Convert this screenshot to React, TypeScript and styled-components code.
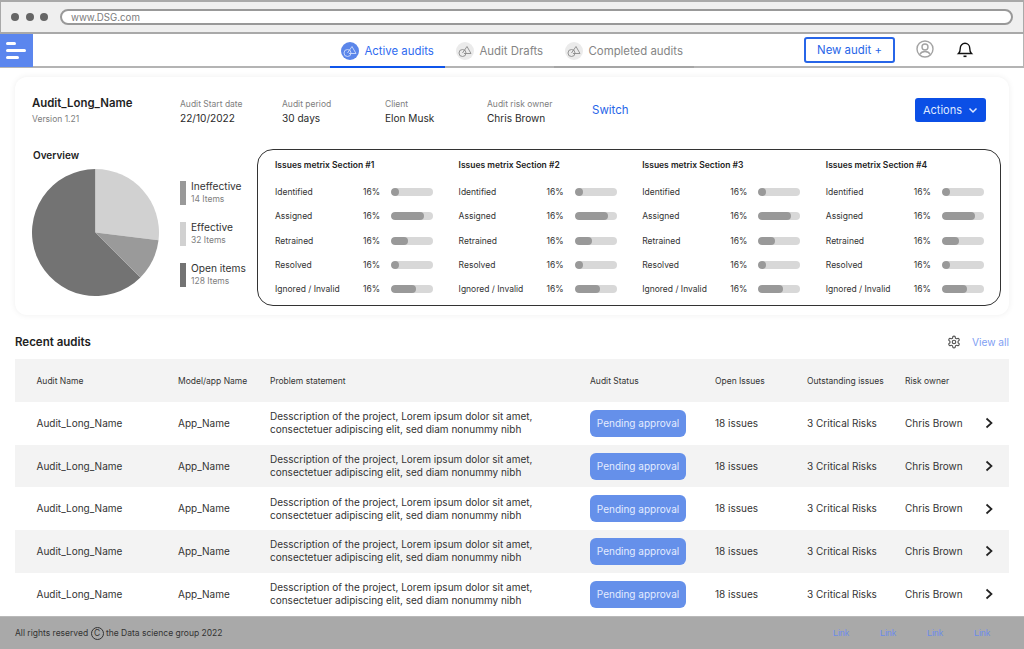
import React from "react";
import styled, { createGlobalStyle } from "styled-components";

const Global = createGlobalStyle`
  html, body { margin: 0; padding: 0; background: #fff; }
  body { font-family: Inter, "Liberation Sans", sans-serif; color: #2b2b2b; }
  * { box-sizing: border-box; }
`;
const Page = styled.div`
  width: 1024px; height: 649px; overflow: hidden; display: flex; flex-direction: column; background: #fff;
`;
const BrowserBar = styled.div`
  height: 34px; flex: none; background: #efefef; border: 2px solid #a9a9a9;
  border-right-width: 1px; border-left-width: 1px;
  display: flex; align-items: center; padding: 0 10px;
`;
const Dots = styled.div`display: flex; gap: 6.5px; margin-right: 12px;`;
const Dot = styled.span`width: 8px; height: 8px; border-radius: 50%; background: #666;`;
const Address = styled.div`
  flex: 1; height: 16px; border: 2px solid #999; border-radius: 8px; background: #fff;
  font-size: 9.7px; color: #7b7b7b; display: flex; align-items: center; padding-left: 9px;
`;
const Nav = styled.nav`
  height: 34px; flex: none; display: flex; align-items: stretch; border-bottom: 2px solid #b4b4b4; border-right: 1px solid #b4b4b4;
`;
const Burger = styled.div`
  width: 33px; margin-bottom: -1px; background: #5b86ee; display: flex; flex-direction: column; justify-content: center; gap: 4px; padding-left: 6px;
`;
const BurgerLine = styled.span<{ $w: number }>`
  display: block; width: ${p => p.$w}px; height: 3px; border-radius: 2px; background: #fff;
`;
const Tabs = styled.div`display: flex; margin-left: 297px;`;
const Tab = styled.div<{ $active?: boolean; $w: number; $line?: boolean }>`
  width: ${p => p.$w}px; display: flex; align-items: center; gap: 6px; padding: 1px 0 0 10.5px; margin-bottom: -2px;
  font-size: 11.4px; color: ${p => (p.$active ? "#2f6bf0" : "#858585")};
  border-bottom: 2px solid ${p => (p.$active ? "#0f55ea" : p.$line ? "#a5a5a5" : "transparent")};
`;
const TabIcon = styled.span<{ $active?: boolean }>`
  width: 18px; height: 18px; border-radius: 50%; flex: none; display: flex; align-items: center; justify-content: center;
  background: ${p => (p.$active ? "#5b86ea" : "#ebebeb")}; color: ${p => (p.$active ? "#cfdcfb" : "#8a8a8a")};
`;
const NewAudit = styled.button`
  margin: 3px 0 3px 110px; width: 91px; height: 26px; border: 2px solid #2765e8; border-radius: 3px; background: #fff;
  color: #2765e8; font: 11.4px Inter, sans-serif; padding: 0;
`;
const IconSlot = styled.span<{ $ml: number; $c: string }>`
  margin-left: ${p => p.$ml}px; display: flex; align-items: center; color: ${p => p.$c}; margin-top: -3px;
`;
const Card = styled.section`
  height: 238px; flex: none; margin: 9px 15px 0; padding: 0 8px 0 17px; border-radius: 12px; background: #fff;
  box-shadow: 0 0 6px rgba(0,0,0,.07); display: flex; flex-direction: column;
`;
const CardTop = styled.div`height: 72px; flex: none; display: flex; align-items: flex-start; padding-top: 19px;`;
const TitleBlock = styled.div`width: 148px; flex: none;`;
const CardTitle = styled.div`font-size: 11.4px; font-weight: 600; color: #1f1f1f; line-height: 14px;`;
const Version = styled.div`font-size: 8.5px; color: #7d7d7d; line-height: 10px; margin-top: 4px;`;
const Meta = styled.div<{ $w: number }>`width: ${p => p.$w}px; flex: none; padding-top: 3px;`;
const MetaLabel = styled.div`font-size: 8.5px; color: #808080; line-height: 10px;`;
const MetaValue = styled.div`font-size: 10.1px; color: #2b2b2b; line-height: 13px; margin-top: 3px;`;
const SwitchLink = styled.div`width: 323px; flex: none; font-size: 11.5px; color: #2765e8; padding-top: 7px;`;
const Actions = styled.button`
  width: 71px; height: 24px; margin-top: 2px; background: #0b4fe6; color: #dfe8ff; border: 0; border-radius: 3px;
  font: 11px Inter, sans-serif; display: flex; align-items: center; justify-content: center; gap: 6px; padding: 0;
`;
const CardBody = styled.div`display: flex; flex: 1;`;
const Overview = styled.div`width: 148px; flex: none;`;
const OverviewTitle = styled.div`font-size: 10px; font-weight: 600; line-height: 12px; color: #222; margin-bottom: 8px; padding-left: 1px;`;
const Pie = styled.svg`display: block;`;
const Legend = styled.div`width: 77px; flex: none; display: flex; flex-direction: column; gap: 17px; padding-top: 32px;`;
const LegendItem = styled.div`display: flex; gap: 5px; height: 24px;`;
const Swatch = styled.span<{ $c: string }>`width: 6px; height: 24px; background: ${p => p.$c};`;
const LegendText = styled.div`margin-top: -1px;`;
const LegendLabel = styled.div`font-size: 10.2px; line-height: 12px; color: #333;`;
const LegendSub = styled.div`font-size: 8.5px; line-height: 11px; color: #808080; margin-top: 2px;`;
const MetricBox = styled.div`
  width: 744px; height: 157px; border: 1px solid #333; border-radius: 16px; padding: 0 0 0 17px;
  display: grid; grid-template-columns: repeat(4, 183.6px);
`;
const Section = styled.div`padding-top: 8.5px;`;
const SectionTitle = styled.div`font-size: 8.5px; font-weight: 600; color: #222; line-height: 12px; margin-bottom: 9.5px;`;
const MetricRow = styled.div`
  height: 24.3px; display: grid; grid-template-columns: 88px 28px 42px; align-items: center; font-size: 8.5px; color: #333;
`;
const Track = styled.div`height: 8px; border-radius: 4px; background: #d8d8d8; overflow: hidden;`;
const Fill = styled.div`height: 8px; border-radius: 4px; background: #999;`;
const RecentHead = styled.div`
  height: 44.4px; flex: none; margin: 0 15px; display: flex; align-items: center; padding-top: 9px;
`;
const RecentTitle = styled.h2`margin: 0; font-size: 11.5px; font-weight: 600; color: #222; flex: 1;`;
const ViewAll = styled.span`font-size: 10.2px; color: #7fa0f3; margin-left: 11px;`;
const Gear = styled.span`display: flex; color: #555;`;
const Table = styled.div`margin: 0 15px; flex: 1; display: flex; flex-direction: column;`;
const Grid = styled.div<{ $shade?: boolean; $h: number }>`
  height: ${p => p.$h}px; flex: none; display: grid; padding-left: 21.5px; align-items: center;
  grid-template-columns: 141.5px 92px 320px 125px 92px 98px 77px 16px;
  background: ${p => (p.$shade ? "#f3f3f3" : "#fff")};
`;
const HeadCell = styled.div`font-size: 8.5px; color: #333;`;
const Cell = styled.div`font-size: 10px; color: #333; line-height: 13px;`;
const Pending = styled.span`
  width: 96px; height: 27px; border-radius: 6px; background: #6590ea; color: #e4ecff; font-size: 10px;
  display: flex; align-items: center; justify-content: center;
`;
const Chevron = styled.span`display: flex; color: #222;`;
const Footer = styled.footer`
  height: 33px; flex: none; background: #a9a9a9; border-top: 1px solid #b9b9b9; display: flex; align-items: center;
  padding: 0 0 0 15px; font-size: 8.5px; color: #333; white-space: pre;
`;
const Copy = styled.span`
  width: 13px; height: 13px; border: 1px solid #333; border-radius: 50%; display: inline-flex; align-items: center; justify-content: center; font-size: 8.5px;
`;
const FooterLinks = styled.div`margin-left: auto; margin-right: 34px; display: flex; gap: 31px;`;
const FooterLink = styled.span`font-family: "Liberation Sans", sans-serif; font-size: 8.8px; width: 16px; color: #6b8bea;`;

const Glyph = () => (
  <svg width="14" height="14" viewBox="0 0 14 14" fill="none" stroke="currentColor" strokeWidth="0.9">
    <circle cx="4.5" cy="9" r="3.5" />
    <path d="M4.5 9 9 2.500 13 9.500H6" />
  </svg>
);
const TabItem = ({ label, w, active, line }: { label: string; w: number; active?: boolean; line?: boolean }) => (
  <Tab $w={w} $active={active} $line={line}>
    <TabIcon $active={active}><Glyph /></TabIcon>
    {label}
  </Tab>
);
const polar = (deg: number, r = 63.5) => {
  const a = ((deg - 90) * Math.PI) / 180;
  return `${63.5 + r * Math.cos(a)} ${63.5 + r * Math.sin(a)}`;
};
const slice = (from: number, to: number) =>
  `M63.5 63.5L${polar(from)}A63.5 63.5 0 ${to - from > 180 ? 1 : 0} 1 ${polar(to)}Z`;

const metricRows: [string, number][] = [
  ["Identified", 8], ["Assigned", 33], ["Retrained", 17], ["Resolved", 8], ["Ignored / Invalid", 25],
];
const rows = [0, 1, 2, 3, 4];

export default function App() {
  return (
    <Page>
      <Global />
      <BrowserBar>
        <Dots><Dot /><Dot /><Dot /></Dots>
        <Address>www.DSG.com</Address>
      </BrowserBar>
      <Nav>
        <Burger>
          <BurgerLine $w={10} /><BurgerLine $w={20} /><BurgerLine $w={13} />
        </Burger>
        <Tabs>
          <TabItem label="Active audits" w={115} active />
          <TabItem label="Audit Drafts" w={109} />
          <TabItem label="Completed audits" w={140} line />
        </Tabs>
        <NewAudit>New audit +</NewAudit>
        <IconSlot $ml={21} $c="#a3a3a3">
          <svg width="18" height="18" viewBox="0 0 18 18" fill="none" stroke="currentColor" strokeWidth="1.4">
            <circle cx="9" cy="9" r="8" />
            <circle cx="9" cy="7" r="3" />
            <path d="M3.800 14.500c1-2.200 3-3 5.200-3s4.200.8 5.200 3" />
          </svg>
        </IconSlot>
        <IconSlot $ml={22} $c="#111">
          <svg width="18" height="18" viewBox="0 0 18 18" fill="none" stroke="currentColor" strokeWidth="1.4">
            <path d="M2.500 13.500h13c-1.300-1.200-1.800-2.500-1.800-5.500a4.700 4.700 0 0 0-9.400 0c0 3-.5 4.300-1.800 5.500Z" />
            <path d="M7.500 16.300h3" strokeWidth="1.6" />
          </svg>
        </IconSlot>
      </Nav>
      <Card>
        <CardTop>
          <TitleBlock>
            <CardTitle>Audit_Long_Name</CardTitle>
            <Version>Version 1.21</Version>
          </TitleBlock>
          <Meta $w={102}><MetaLabel>Audit Start date</MetaLabel><MetaValue>22/10/2022</MetaValue></Meta>
          <Meta $w={103}><MetaLabel>Audit period</MetaLabel><MetaValue>30 days</MetaValue></Meta>
          <Meta $w={102}><MetaLabel>Client</MetaLabel><MetaValue>Elon Musk</MetaValue></Meta>
          <Meta $w={105}><MetaLabel>Audit risk owner</MetaLabel><MetaValue>Chris Brown</MetaValue></Meta>
          <SwitchLink>Switch</SwitchLink>
          <Actions>
            Actions
            <svg width="10" height="10" viewBox="0 0 10 10" fill="none" stroke="currentColor" strokeWidth="1.5"><path d="M1.500 3.500 5 7l3.500-3.500" /></svg>
          </Actions>
        </CardTop>
        <CardBody>
          <Overview>
            <OverviewTitle>Overview</OverviewTitle>
            <Pie width="127" height="127" viewBox="0 0 127 127">
              <path d={slice(135, 360)} fill="#737373" />
              <path d={slice(0, 97)} fill="#d1d1d1" />
              <path d={slice(97, 135)} fill="#9a9a9a" />
            </Pie>
          </Overview>
          <Legend>
            <LegendItem><Swatch $c="#999" /><LegendText><LegendLabel>Ineffective</LegendLabel><LegendSub>14 Items</LegendSub></LegendText></LegendItem>
            <LegendItem><Swatch $c="#d1d1d1" /><LegendText><LegendLabel>Effective</LegendLabel><LegendSub>32 Items</LegendSub></LegendText></LegendItem>
            <LegendItem><Swatch $c="#737373" /><LegendText><LegendLabel>Open items</LegendLabel><LegendSub>128 Items</LegendSub></LegendText></LegendItem>
          </Legend>
          <MetricBox>
            {[1, 2, 3, 4].map(n => (
              <Section key={n}>
                <SectionTitle>Issues metrix Section #{n}</SectionTitle>
                {metricRows.map(([label, w]) => (
                  <MetricRow key={label}>
                    <span>{label}</span>
                    <span>16%</span>
                    <Track><Fill style={{ width: w }} /></Track>
                  </MetricRow>
                ))}
              </Section>
            ))}
          </MetricBox>
        </CardBody>
      </Card>
      <RecentHead>
        <RecentTitle>Recent audits</RecentTitle>
        <Gear>
          <svg width="14" height="14" viewBox="0 0 24 24" fill="none" stroke="currentColor" strokeWidth="2" strokeLinecap="round" strokeLinejoin="round">
            <path d="M12.220 2h-.44a2 2 0 0 0-2 2v.18a2 2 0 0 1-1 1.730l-.43.25a2 2 0 0 1-2 0l-.15-.08a2 2 0 0 0-2.730.73l-.22.38a2 2 0 0 0 .73 2.730l.15.1a2 2 0 0 1 1 1.720v.51a2 2 0 0 1-1 1.740l-.15.09a2 2 0 0 0-.73 2.730l.22.38a2 2 0 0 0 2.730.73l.15-.08a2 2 0 0 1 2 0l.43.25a2 2 0 0 1 1 1.730V20a2 2 0 0 0 2 2h.44a2 2 0 0 0 2-2v-.18a2 2 0 0 1 1-1.730l.43-.25a2 2 0 0 1 2 0l.15.08a2 2 0 0 0 2.730-.73l.22-.39a2 2 0 0 0-.73-2.730l-.15-.08a2 2 0 0 1-1-1.740v-.5a2 2 0 0 1 1-1.740l.15-.09a2 2 0 0 0 .73-2.730l-.22-.38a2 2 0 0 0-2.730-.73l-.15.08a2 2 0 0 1-2 0l-.43-.25a2 2 0 0 1-1-1.730V4a2 2 0 0 0-2-2z" />
            <circle cx="12" cy="12" r="3" />
          </svg>
        </Gear>
        <ViewAll>View all</ViewAll>
      </RecentHead>
      <Table>
        <Grid $shade $h={42.7}>
          <HeadCell>Audit Name</HeadCell>
          <HeadCell>Model/app Name</HeadCell>
          <HeadCell>Problem statement</HeadCell>
          <HeadCell>Audit Status</HeadCell>
          <HeadCell>Open Issues</HeadCell>
          <HeadCell>Outstanding issues</HeadCell>
          <HeadCell>Risk owner</HeadCell>
          <span />
        </Grid>
        {rows.map(i => (
          <Grid key={i} $shade={i % 2 === 1} $h={42.7}>
            <Cell>Audit_Long_Name</Cell>
            <Cell>App_Name</Cell>
            <Cell>Desscription of the project, Lorem ipsum dolor sit amet,<br />consectetuer adipiscing elit, sed diam nonummy nibh</Cell>
            <Pending>Pending approval</Pending>
            <Cell>18 issues</Cell>
            <Cell>3 Critical Risks</Cell>
            <Cell>Chris Brown</Cell>
            <Chevron>
              <svg width="14" height="14" viewBox="0 0 14 14" fill="none" stroke="currentColor" strokeWidth="1.700"><path d="M4.500 2.500 9.500 7l-5 4.500" /></svg>
            </Chevron>
          </Grid>
        ))}
      </Table>
      <Footer>
        All rights reserved <Copy>C</Copy> the Data science group 2022
        <FooterLinks>
          <FooterLink>Link</FooterLink><FooterLink>Link</FooterLink><FooterLink>Link</FooterLink><FooterLink>Link</FooterLink>
        </FooterLinks>
      </Footer>
    </Page>
  );
}
